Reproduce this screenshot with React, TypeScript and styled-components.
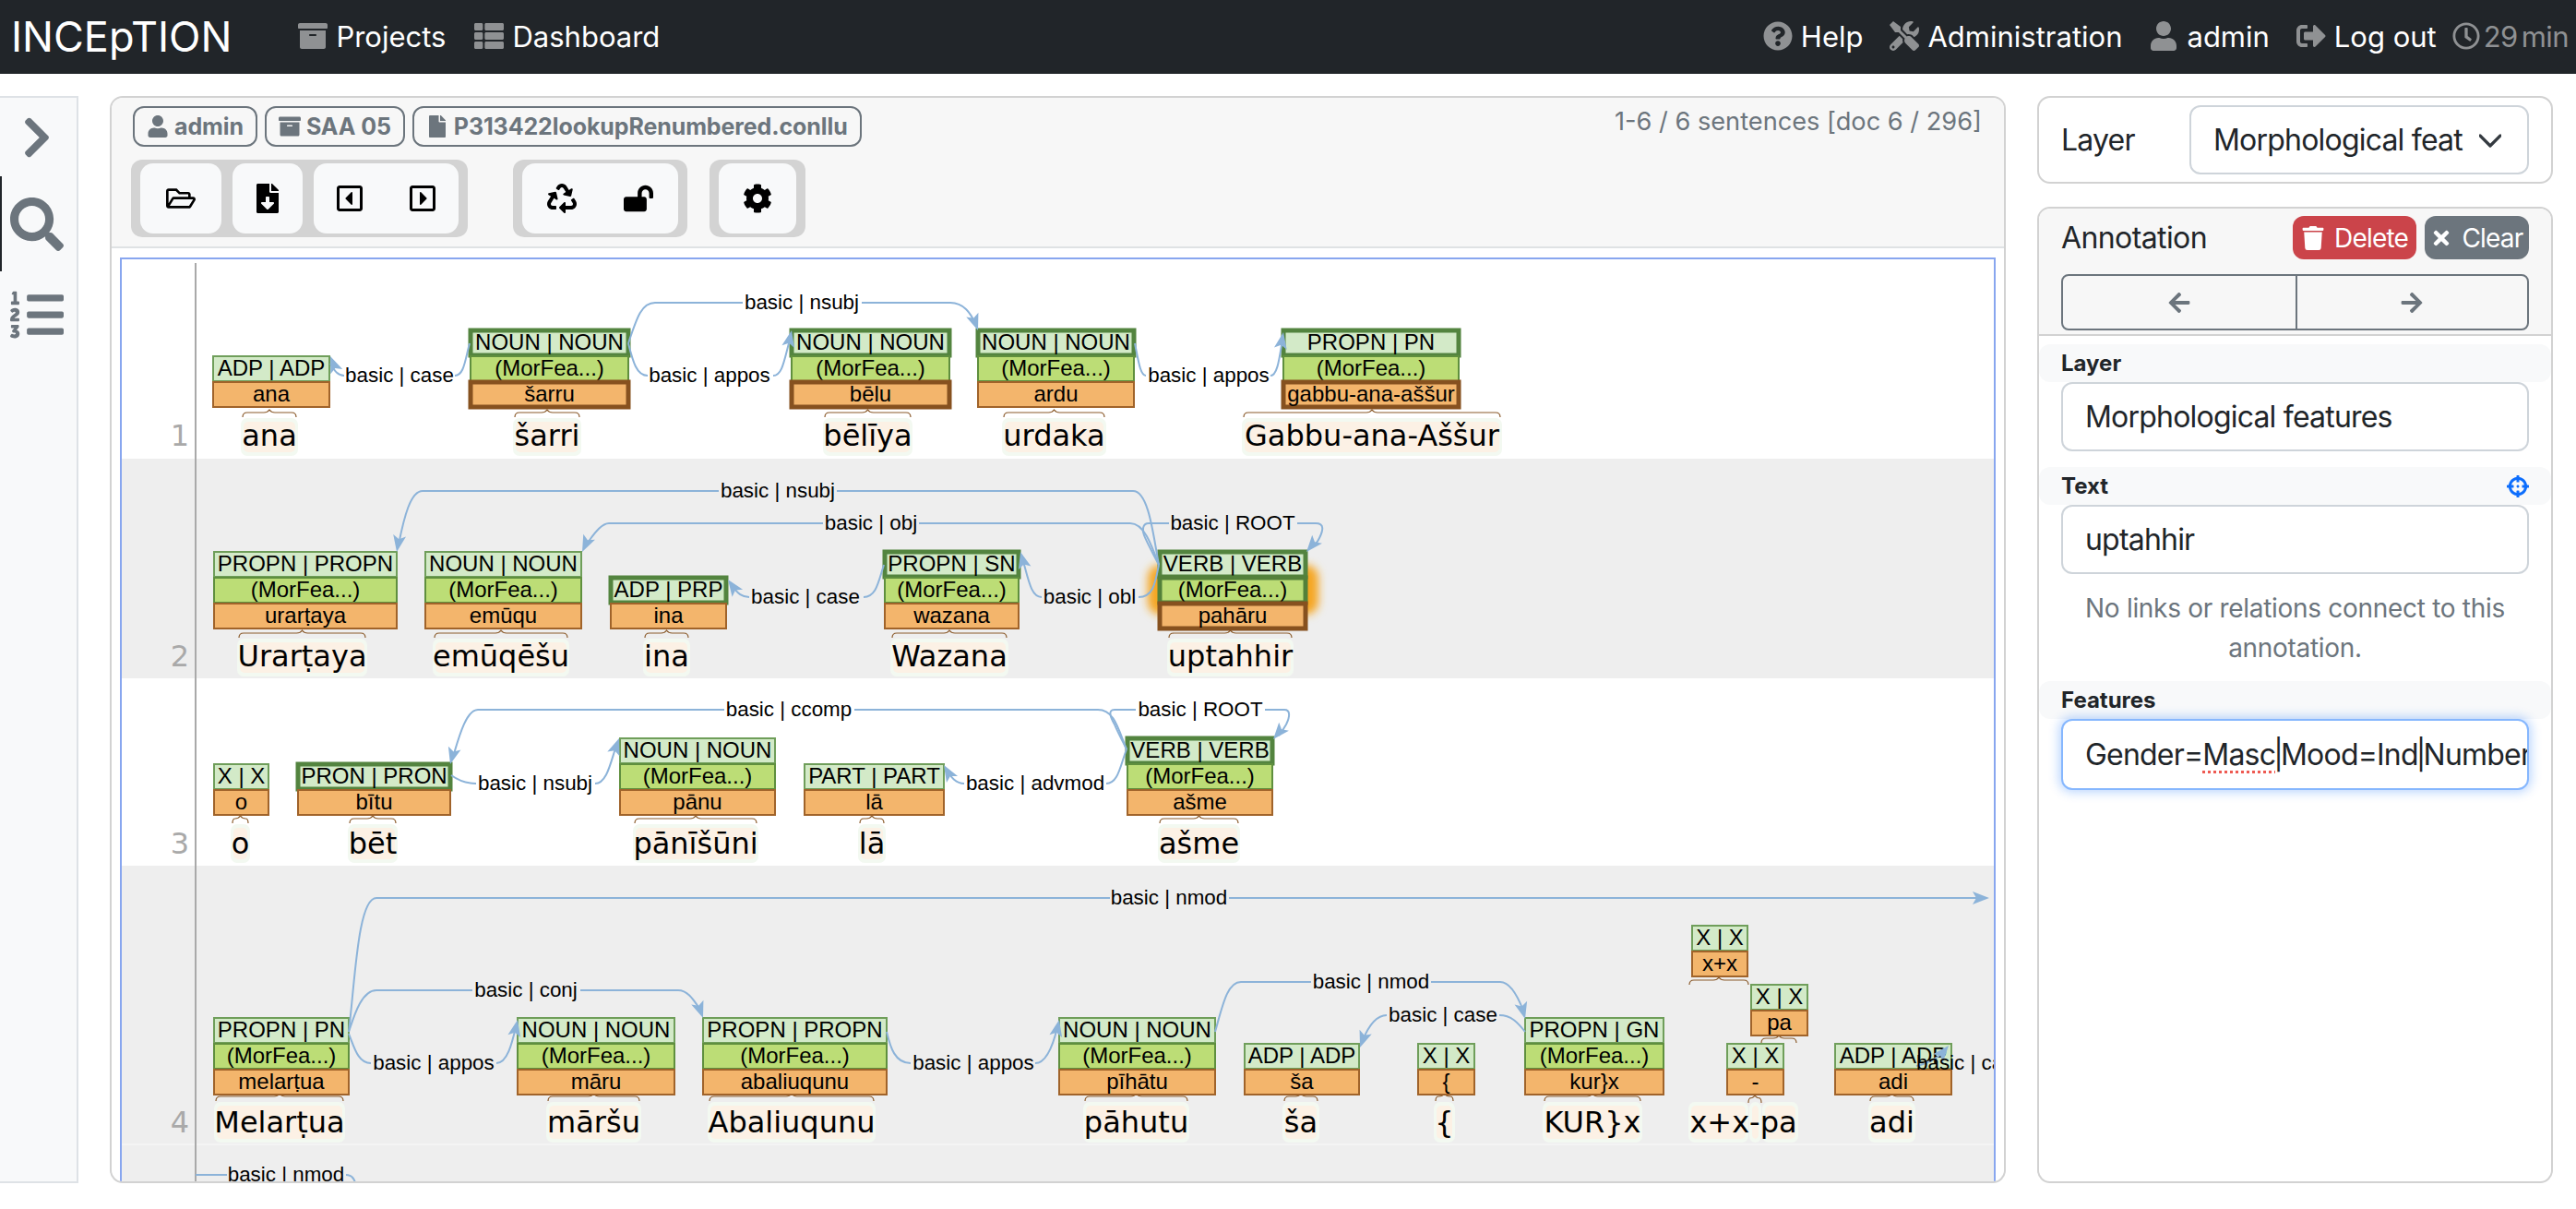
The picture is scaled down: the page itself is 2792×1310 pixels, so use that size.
import React from 'react'
import styled, { createGlobalStyle } from 'styled-components'
import {
  FaArchive, FaArrowLeft, FaArrowRight, FaChevronRight, FaCog, FaCrosshairs, FaFile, FaFileDownload,
  FaListOl, FaLockOpen, FaQuestionCircle, FaRecycle, FaRegCaretSquareLeft, FaRegCaretSquareRight,
  FaRegClock, FaRegFolderOpen, FaSearch, FaSignOutAlt, FaThList, FaTimes, FaTools, FaTrash, FaUser,
} from 'react-icons/fa'

const GlobalStyle = createGlobalStyle`
  html, body { margin: 0; padding: 0; background: #fff; }
  body { width: 2792px; height: 1310px; overflow: hidden; font-family: Inter, "Liberation Sans", sans-serif; color: #212529; }
  * { box-sizing: border-box; }
`

const Page = styled.div`
  width: 2792px;
  height: 1310px;
  display: flex;
  flex-direction: column;
`

const Navbar = styled.nav`
  height: 80px;
  flex: none;
  background: #212529;
  display: flex;
  align-items: center;
  padding: 0 8px 2px 12px;
  color: #fff;
`

const Brand = styled.span`
  font-size: 45px;
  margin-right: 72px;
`

const NavGroup = styled.div<{ $right?: boolean }>`
  display: flex;
  align-items: center;
  gap: ${p => (p.$right ? 29 : 31)}px;
  margin-left: ${p => (p.$right ? 'auto' : '0')};
`

const NavLink = styled.a`
  display: flex;
  align-items: center;
  gap: 9px;
  font-size: 31px;
  svg { color: #8f9193; }
`

const Timer = styled.span`
  display: flex;
  align-items: center;
  gap: 4px;
  font-size: 31px;
  letter-spacing: -0.6px;
  word-spacing: -4px;
  color: #8f9193;
  margin-left: -12px;
`

const Workspace = styled.div`
  flex: 1;
  min-height: 0;
  display: flex;
  gap: 34px;
  padding: 24px 25px 28px 0;
`

const Sidebar = styled.aside`
  width: 85px;
  flex: none;
  background: #f8f9fa;
  border: 2px solid #dee2e6;
  border-left: none;
  color: #6c757d;
  display: flex;
  flex-direction: column;
`

const SideItem = styled.div<{ $height: number; $active?: boolean }>`
  height: ${p => p.$height}px;
  display: flex;
  align-items: center;
  justify-content: center;
  border-left: 2px solid ${p => (p.$active ? '#212529' : 'transparent')};
  padding-right: 6px;
`

const Card = styled.section`
  border: 2px solid #d2d2d2;
  border-radius: 14px;
  overflow: hidden;
  background: #fff;
  display: flex;
  flex-direction: column;
`

const EditorCard = styled(Card)`
  width: 2055px;
  flex: none;
`

const EditorHeader = styled.header`
  flex: none;
  height: 163px;
  background: #f7f7f7;
  border-bottom: 2px solid #dfe2e4;
  padding: 9px 23px 0;
  position: relative;
`

const BadgeRow = styled.div`
  display: flex;
  gap: 8px;
`

const Badge = styled.span`
  height: 44px;
  display: flex;
  align-items: center;
  gap: 6px;
  padding: 0 13px;
  border: 2px solid #6c757d;
  border-radius: 12px;
  color: #6c757d;
  font-size: 25px;
  font-weight: 700;
  letter-spacing: -0.1px;
`

const SentenceInfo = styled.span`
  position: absolute;
  right: 24px;
  top: 9px;
  font-size: 27.2px;
  color: #6c757d;
`

const Toolbar = styled.div`
  display: flex;
  margin: 14px 0 0 -2px;
`

const ToolGroup = styled.div<{ $gapAfter: number }>`
  display: flex;
  gap: 12px;
  background: #d3d3d3;
  border-radius: 12px;
  padding: 4px 10px;
  margin-right: ${p => p.$gapAfter}px;
`

const ToolButton = styled.div<{ $width: number; $gap?: number }>`
  width: ${p => p.$width}px;
  height: 76px;
  background: #f8f9fa;
  border-radius: 14px;
  display: flex;
  align-items: center;
  justify-content: center;
  gap: ${p => p.$gap ?? 0}px;
  color: #000;
`

const AnnotationView = styled.div`
  flex: 1;
  min-height: 0;
  padding: 10px 9px 0;
`

const ViewFrame = styled.div`
  border: 2px solid #88a6ef;
  border-bottom: none;
  height: 1010px;
`

const Diagram = styled.svg`
  display: block;
`

const RowBand = styled.rect<{ $grey?: boolean }>`
  fill: ${p => (p.$grey ? '#eeeeee' : '#ffffff')};
`

const RowDivider = styled.line`
  stroke: #f4f4f4;
  stroke-width: 2px;
`

const BOX_STYLE = {
  pos: { fill: '#d3eac8', thin: '#6f9e5a', thick: '#53843f' },
  morph: { fill: '#bcdd76', thin: '#5f8f3e', thick: '#53803a' },
  lemma: { fill: '#f3b56c', thin: '#a0632a', thick: '#86511f' },
}

type BoxKind = keyof typeof BOX_STYLE

const BoxRect = styled.rect<{ $kind: BoxKind; $thick?: boolean }>`
  fill: ${p => BOX_STYLE[p.$kind].fill};
  stroke: ${p => (p.$thick ? BOX_STYLE[p.$kind].thick : BOX_STYLE[p.$kind].thin)};
  stroke-width: ${p => (p.$thick ? 5 : 2)}px;
`

const BoxText = styled.text`
  font-family: "Liberation Sans", Arial, sans-serif;
  font-size: 24px;
  fill: #000;
  text-anchor: middle;
`

const ArcLabel = styled.text<{ $start?: boolean }>`
  font-family: "Liberation Sans", Arial, sans-serif;
  font-size: 22.4px;
  fill: #000;
  text-anchor: ${p => (p.$start ? 'start' : 'middle')};
`

const ArcLine = styled.path`
  fill: none;
  stroke: #8cb3d9;
  stroke-width: 2px;
`

const ArrowHead = styled.path`
  fill: #8cb3d9;
`

const Brace = styled.path`
  fill: none;
  stroke: #8a5a2a;
  stroke-width: 1.2px;
`

const TokenOuter = styled.rect`
  fill: #f3f9f1;
`

const TokenInner = styled.rect`
  fill: #fcf1e5;
`

const TokenWord = styled.text`
  font-family: "DejaVu Sans", Verdana, sans-serif;
  font-size: 32px;
  fill: #000;
  text-anchor: middle;
`

const RowNumber = styled.text`
  font-family: "DejaVu Sans", Verdana, sans-serif;
  font-size: 32px;
  fill: #a9a9a9;
  text-anchor: end;
`

const SentenceRule = styled.line`
  stroke: #a9a9a9;
  stroke-width: 2px;
`

const Glow = styled.rect`
  fill: #f5a623;
`

const SidePanel = styled.div`
  flex: 1;
  min-width: 0;
  display: flex;
  flex-direction: column;
  gap: 25px;
`

const LayerCard = styled(Card)`
  height: 95px;
  flex: none;
  flex-direction: row;
  align-items: center;
  justify-content: space-between;
  padding: 0 24px;
  font-size: 32px;
  letter-spacing: -0.8px;
`

const SelectBox = styled.div`
  width: 368px;
  height: 75px;
  border: 2px solid #ced4da;
  border-radius: 12px;
  display: flex;
  align-items: center;
  justify-content: space-between;
  padding: 0 28px 0 24px;
  font-size: 32px;
  white-space: nowrap;
  overflow: hidden;
`

const AnnotationCard = styled(Card)`
  flex: 1;
  min-height: 0;
`

const AnnotationHeader = styled.header`
  flex: none;
  height: 138px;
  background: #f7f7f7;
  border-bottom: 2px solid #d2d2d2;
  padding: 8px 24px 0;
`

const TitleRow = styled.div`
  display: flex;
  align-items: center;
  justify-content: space-between;
  height: 47px;
  font-size: 32px;
  letter-spacing: -0.6px;
`

const ButtonPair = styled.div`
  display: flex;
  gap: 9px;
`

const ActionButton = styled.span<{ $danger?: boolean; $width: number }>`
  width: ${p => p.$width}px;
  height: 47px;
  border-radius: 12px;
  background: ${p => (p.$danger ? '#cb444a' : '#6c757d')};
  color: #fff;
  font-size: 28px;
  letter-spacing: -0.8px;
  display: flex;
  align-items: center;
  justify-content: center;
  gap: 10px;
`

const StepGroup = styled.div`
  margin-top: 16px;
  height: 61px;
  border: 2px solid #6c757d;
  border-radius: 8px;
  display: grid;
  grid-template-columns: 1fr 1fr;
  color: #6c757d;
`

const StepCell = styled.span<{ $divider?: boolean }>`
  display: flex;
  align-items: center;
  justify-content: center;
  border-left: ${p => (p.$divider ? '2px solid #6c757d' : 'none')};
`

const FormBody = styled.div`
  padding-top: 9px;
`

const FieldStrip = styled.div`
  height: 41px;
  background: #f8f9fa;
  border-radius: 12px;
  display: flex;
  align-items: center;
  justify-content: space-between;
  padding: 0 24px;
  font-size: 24px;
  font-weight: 700;
  svg { color: #0d6efd; }
`

const FieldInput = styled.div<{ $focus?: boolean }>`
  height: ${p => (p.$focus ? 77 : 75)}px;
  margin: 0 24px 17px;
  border: 2px solid ${p => (p.$focus ? '#86b7fe' : '#ced4da')};
  border-radius: 12px;
  display: flex;
  align-items: center;
  padding-left: 24px;
  font-size: 32px;
  letter-spacing: -0.8px;
  white-space: pre;
  overflow: hidden;
  background: #fff;
  box-shadow: ${p => (p.$focus ? '0 0 12px 2px rgba(13, 110, 253, 0.3)' : 'none')};
`

const Misspelled = styled.span`
  text-decoration: underline dotted #ee5a52 3px;
  text-underline-offset: 6px;
`

const Pipe = styled.span`
  margin: 0 -2px;
`

const HelpText = styled.p`
  margin: -1px 24px 14px;
  text-align: center;
  font-size: 28px;
  letter-spacing: -0.3px;
  line-height: 43px;
  color: #6c757d;
`

type Column = {
  x1: number
  x2: number
  o: number
  pos: string
  lemma: string
  morph?: boolean
  bold?: string
}

const R1 = 414
const R2 = 654
const R3 = 856
const R4 = 1159

const columns: Column[] = [
  { x1: 231, x2: 357, o: R1, pos: 'ADP | ADP', lemma: 'ana' },
  { x1: 510, x2: 681, o: R1, pos: 'NOUN | NOUN', lemma: 'šarru', morph: true, bold: 'pl' },
  { x1: 858, x2: 1029, o: R1, pos: 'NOUN | NOUN', lemma: 'bēlu', morph: true, bold: 'pl' },
  { x1: 1060, x2: 1229, o: R1, pos: 'NOUN | NOUN', lemma: 'ardu', morph: true, bold: 'p' },
  { x1: 1391, x2: 1581, o: R1, pos: 'PROPN | PN', lemma: 'gabbu-ana-aššur', morph: true, bold: 'pl' },
  { x1: 232, x2: 430, o: R2, pos: 'PROPN | PROPN', lemma: 'urarṭaya', morph: true },
  { x1: 461, x2: 630, o: R2, pos: 'NOUN | NOUN', lemma: 'emūqu', morph: true },
  { x1: 662, x2: 787, o: R2, pos: 'ADP | PRP', lemma: 'ina', bold: 'p' },
  { x1: 959, x2: 1104, o: R2, pos: 'PROPN | SN', lemma: 'wazana', morph: true, bold: 'p' },
  { x1: 1257, x2: 1415, o: R2, pos: 'VERB | VERB', lemma: 'pahāru', morph: true, bold: 'pml' },
  { x1: 232, x2: 291, o: R3, pos: 'X | X', lemma: 'o' },
  { x1: 323, x2: 488, o: R3, pos: 'PRON | PRON', lemma: 'bītu', bold: 'p' },
  { x1: 672, x2: 840, o: R3, pos: 'NOUN | NOUN', lemma: 'pānu', morph: true },
  { x1: 872, x2: 1023, o: R3, pos: 'PART | PART', lemma: 'lā' },
  { x1: 1222, x2: 1379, o: R3, pos: 'VERB | VERB', lemma: 'ašme', morph: true, bold: 'p' },
  { x1: 232, x2: 378, o: R4, pos: 'PROPN | PN', lemma: 'melarṭua', morph: true },
  { x1: 561, x2: 731, o: R4, pos: 'NOUN | NOUN', lemma: 'māru', morph: true },
  { x1: 762, x2: 961, o: R4, pos: 'PROPN | PROPN', lemma: 'abaliuqunu', morph: true },
  { x1: 1148, x2: 1317, o: R4, pos: 'NOUN | NOUN', lemma: 'pīhātu', morph: true },
  { x1: 1349, x2: 1473, o: R4, pos: 'ADP | ADP', lemma: 'ša' },
  { x1: 1537, x2: 1598, o: R4, pos: 'X | X', lemma: '{' },
  { x1: 1653, x2: 1803, o: R4, pos: 'PROPN | GN', lemma: 'kur}x', morph: true },
  { x1: 1872, x2: 1933, o: R4, pos: 'X | X', lemma: '-' },
  { x1: 1989, x2: 2115, o: R4, pos: 'ADP | ADP', lemma: 'adi' },
  { x1: 1834, x2: 1894, o: 1031, pos: 'X | X', lemma: 'x+x' },
  { x1: 1898, x2: 1959, o: 1095, pos: 'X | X', lemma: 'pa' },
]

type Token = {
  x1: number
  x2: number
  y: number
  h: number
  text: string
  base: number
  parts?: [number, number][]
  noBrace?: boolean
}

const tokens: Token[] = [
  { x1: 261, x2: 323, y: 453, h: 41, text: 'ana', base: 483 },
  { x1: 556, x2: 630, y: 453, h: 41, text: 'šarri', base: 483 },
  { x1: 892, x2: 989, y: 453, h: 41, text: 'bēlīya', base: 483 },
  { x1: 1086, x2: 1199, y: 453, h: 41, text: 'urdaka', base: 483 },
  { x1: 1346, x2: 1628, y: 453, h: 41, text: 'Gabbu-ana-Aššur', base: 483 },
  { x1: 257, x2: 398, y: 692, h: 41, text: 'Urarṭaya', base: 722 },
  { x1: 469, x2: 617, y: 692, h: 41, text: 'emūqēšu', base: 722 },
  { x1: 697, x2: 748, y: 692, h: 41, text: 'ina', base: 722 },
  { x1: 965, x2: 1093, y: 692, h: 41, text: 'Wazana', base: 722 },
  { x1: 1265, x2: 1402, y: 692, h: 41, text: 'uptahhir', base: 722 },
  { x1: 250, x2: 271, y: 893, h: 42, text: 'o', base: 925 },
  { x1: 377, x2: 431, y: 893, h: 42, text: 'bēt', base: 925 },
  { x1: 686, x2: 822, y: 893, h: 42, text: 'pānīšūni', base: 925 },
  { x1: 930, x2: 960, y: 893, h: 42, text: 'lā', base: 925 },
  { x1: 1255, x2: 1344, y: 893, h: 42, text: 'ašme', base: 925 },
  { x1: 232, x2: 374, y: 1194, h: 44, text: 'Melarṭua', base: 1227 },
  { x1: 592, x2: 695, y: 1194, h: 44, text: 'māršu', base: 1227 },
  { x1: 767, x2: 949, y: 1194, h: 44, text: 'Abaliuqunu', base: 1227 },
  { x1: 1174, x2: 1289, y: 1194, h: 44, text: 'pāhutu', base: 1227 },
  { x1: 1390, x2: 1430, y: 1194, h: 44, text: 'ša', base: 1227 },
  { x1: 1554, x2: 1577, y: 1194, h: 44, text: '{', base: 1227 },
  { x1: 1672, x2: 1780, y: 1194, h: 44, text: 'KUR}x', base: 1227 },
  { x1: 1830, x2: 1949, y: 1194, h: 44, text: 'x+x-pa', base: 1227, noBrace: true, parts: [[1830, 1895], [1896, 1909], [1910, 1949]] },
  { x1: 2025, x2: 2076, y: 1194, h: 44, text: 'adi', base: 1227 },
]

type Curly = { x1: number; x2: number; y: number }

const extraBraces: Curly[] = [
  { x1: 1831, x2: 1895, y: 1067 },
  { x1: 1909, x2: 1947, y: 1130 },
  { x1: 1895, x2: 1909, y: 1195 },
]

type Arc = { lines: string[]; tip?: [number, number, number]; label: string; x: number; y: number; start?: boolean }

const arcs: Arc[] = [
  { lines: ['M509 372 C504 390 503 407 493 407', 'M373 407 C365 407 362 400 358 394'], tip: [358, 386, -112], label: 'basic | case', x: 433, y: 414 },
  { lines: ['M681 372 C686 392 690 407 702 407', 'M838 407 C848 407 850 390 856 368'], tip: [858, 358, -78], label: 'basic | appos', x: 769, y: 414 },
  { lines: ['M681 372 C690 345 695 328 710 328 H805', 'M934 328 H1030 C1045 328 1052 340 1057 350'], tip: [1060, 358, 70], label: 'basic | nsubj', x: 869, y: 335 },
  { lines: ['M1230 372 C1234 392 1236 407 1242 407', 'M1377 407 C1385 407 1387 385 1390 368'], tip: [1391, 360, -80], label: 'basic | appos', x: 1310, y: 414 },

  { lines: ['M1256 612 C1250 580 1245 532 1228 532 H907', 'M779 532 H458 C445 532 438 560 432 590'], tip: [430, 598, 100], label: 'basic | nsubj', x: 843, y: 539 },
  { lines: ['M1256 612 C1248 590 1240 567 1225 567 H996', 'M892 567 H660 C650 567 640 585 635 590'], tip: [631, 598, 115], label: 'basic | obj', x: 944, y: 574 },
  { lines: ['M1267 567 H1245 C1238 567 1238 575 1240 580 C1244 590 1250 600 1256 612', 'M1406 567 H1426 C1436 567 1434 575 1430 583 C1427 589 1425 591 1422 592'], tip: [1416, 598, 130], label: 'basic | ROOT', x: 1336, y: 574 },
  { lines: ['M958 612 C952 630 950 647 936 647', 'M812 647 C802 647 798 640 794 636'], tip: [789, 628, -125], label: 'basic | case', x: 873, y: 654 },
  { lines: ['M1256 612 C1252 632 1250 647 1234 647', 'M1129 647 C1118 647 1115 630 1109 608'], tip: [1106, 598, -105], label: 'basic | obl', x: 1181, y: 654 },

  { lines: ['M1221 812 C1212 790 1208 769 1190 769 H926', 'M785 769 H518 C505 769 497 800 491 820'], tip: [488, 828, 105], label: 'basic | ccomp', x: 855, y: 776 },
  { lines: ['M1231 769 H1208 C1200 769 1204 778 1208 785 C1212 795 1218 805 1221 812', 'M1371 769 H1392 C1399 769 1398 777 1394 785 C1391 790 1388 795 1386 797'], tip: [1380, 801, 130], label: 'basic | ROOT', x: 1301, y: 776 },
  { lines: ['M489 840 C496 845 504 849 516 849', 'M645 849 C658 849 662 825 668 808'], tip: [671, 800, -70], label: 'basic | nsubj', x: 580, y: 856 },
  { lines: ['M1199 849 C1212 849 1214 830 1221 812', 'M1045 849 C1036 849 1031 842 1027 836'], tip: [1023, 829, -120], label: 'basic | advmod', x: 1122, y: 856 },

  { lines: ['M378 1118 C385 1060 388 973 408 973 H1203', 'M1332 973 H2145'], tip: [2156, 973, 0], label: 'basic | nmod', x: 1267, y: 980 },
  { lines: ['M378 1118 C384 1100 392 1073 408 1073 H512', 'M629 1073 H735 C748 1073 755 1090 760 1095'], tip: [762, 1103, 70], label: 'basic | conj', x: 570, y: 1080 },
  { lines: ['M378 1120 C384 1135 388 1152 402 1152', 'M538 1152 C550 1152 555 1130 559 1113'], tip: [561, 1105, -78], label: 'basic | appos', x: 470, y: 1159 },
  { lines: ['M961 1118 C965 1135 970 1152 987 1152', 'M1122 1152 C1135 1152 1142 1130 1146 1113'], tip: [1148, 1105, -78], label: 'basic | appos', x: 1055, y: 1159 },
  { lines: ['M1317 1118 C1325 1090 1330 1064 1345 1064 H1421', 'M1551 1064 H1626 C1638 1064 1646 1082 1651 1095'], tip: [1653, 1104, 75], label: 'basic | nmod', x: 1486, y: 1071 },
  { lines: ['M1653 1118 C1645 1108 1638 1100 1625 1100', 'M1503 1100 C1490 1100 1482 1115 1477 1127'], tip: [1474, 1135, 110], label: 'basic | case', x: 1564, y: 1107 },
  { lines: ['M2077 1155 C2090 1152 2100 1146 2105 1141'], tip: [2112, 1133, -50], label: 'basic | case', x: 2077, y: 1159, start: true },
  { lines: ['M212 1273 H246', 'M375 1273 C382 1273 384 1278 386 1284'], label: 'basic | nmod', x: 310, y: 1280 },
]

const bracePath = ({ x1, x2, y }: Curly) => {
  const cx = (x1 + x2) / 2
  const r = Math.min(5, (x2 - x1) / 6)
  return `M${x1} ${y} q0 -5 ${r} -5 H${cx - 6} q4 0 6 -3 q2 3 6 3 H${x2 - r} q${r} 0 ${r} 5`
}

function StackedColumn({ col }: { col: Column }) {
  const w = col.x2 - col.x1
  const cx = (col.x1 + col.x2) / 2
  const bold = col.bold ?? ''
  const posY = col.o - (col.morph ? 56 : 28)
  return (
    <g>
      <BoxRect $kind="pos" $thick={bold.includes('p')} x={col.x1} y={posY} width={w} height={27} />
      <BoxText x={cx} y={posY + 21}>{col.pos}</BoxText>
      {col.morph && (
        <>
          <BoxRect $kind="morph" $thick={bold.includes('m')} x={col.x1} y={col.o - 28} width={w} height={27} />
          <BoxText x={cx} y={col.o - 7}>(MorFea...)</BoxText>
        </>
      )}
      <BoxRect $kind="lemma" $thick={bold.includes('l')} x={col.x1} y={col.o} width={w} height={27} />
      <BoxText x={cx} y={col.o + 21}>{col.lemma}</BoxText>
    </g>
  )
}

function TokenMark({ token }: { token: Token }) {
  const cx = (token.x1 + token.x2) / 2
  const parts = token.parts ?? [[token.x1, token.x2]]
  return (
    <g>
      {parts.map(([a, b], i) => (
        <g key={i}>
          <TokenOuter x={a} y={token.y} width={b - a} height={token.h} rx={7} />
          <TokenInner x={a + 3} y={token.y + 4} width={b - a - 6} height={token.h - 8} rx={5} />
        </g>
      ))}
      {!token.noBrace && <Brace d={bracePath({ x1: token.x1 + 2, x2: token.x2 - 2, y: token.y - 1 })} />}
      <TokenWord x={cx} y={token.base}>{token.text}</TokenWord>
    </g>
  )
}

function ArcMark({ arc }: { arc: Arc }) {
  return (
    <g>
      {arc.lines.map((d, i) => <ArcLine key={i} d={d} />)}
      {arc.tip && (
        <ArrowHead d="M0 0 L-18 -7 L-14 0 L-18 7 Z" transform={`translate(${arc.tip[0]} ${arc.tip[1]}) rotate(${arc.tip[2]})`} />
      )}
      <ArcLabel $start={arc.start} x={arc.x} y={arc.y}>{arc.label}</ArcLabel>
    </g>
  )
}

function SentenceDiagram() {
  return (
    <Diagram width={2029} height={1010} viewBox="132 281 2029 1010">
      <defs>
        <filter id="selected-glow" x="-20%" y="-40%" width="140%" height="180%">
          <feGaussianBlur stdDeviation="5" />
        </filter>
      </defs>
      <RowBand x={132} y={281} width={2029} height={216} />
      <RowBand $grey x={132} y={497} width={2029} height={238} />
      <RowBand x={132} y={735} width={2029} height={203} />
      <RowBand $grey x={132} y={938} width={2029} height={352} />
      <RowDivider x1={132} y1={1240} x2={2161} y2={1240} />
      <SentenceRule x1={212} y1={285} x2={212} y2={1291} />
      <RowNumber x={205} y={483}>1</RowNumber>
      <RowNumber x={205} y={722}>2</RowNumber>
      <RowNumber x={205} y={925}>3</RowNumber>
      <RowNumber x={205} y={1227}>4</RowNumber>
      <Glow x={1244} y={612} width={185} height={54} rx={14} filter="url(#selected-glow)" />
      {tokens.map((t, i) => <TokenMark key={i} token={t} />)}
      {extraBraces.map((b, i) => <Brace key={i} d={bracePath(b)} />)}
      {columns.map((c, i) => <StackedColumn key={i} col={c} />)}
      {arcs.map((a, i) => <ArcMark key={i} arc={a} />)}
    </Diagram>
  )
}

export default function App() {
  return (
    <Page>
      <GlobalStyle />
      <Navbar>
        <Brand>INCEpTION</Brand>
        <NavGroup>
          <NavLink><FaArchive size={32} />Projects</NavLink>
          <NavLink><FaThList size={32} />Dashboard</NavLink>
        </NavGroup>
        <NavGroup $right>
          <NavLink><FaQuestionCircle size={32} />Help</NavLink>
          <NavLink><FaTools size={32} />Administration</NavLink>
          <NavLink><FaUser size={32} />admin</NavLink>
          <NavLink><FaSignOutAlt size={32} />Log out</NavLink>
          <Timer><FaRegClock size={30} />29 min</Timer>
        </NavGroup>
      </Navbar>
      <Workspace>
        <Sidebar>
          <SideItem $height={85}><FaChevronRight size={50} /></SideItem>
          <SideItem $height={103} $active><FaSearch size={58} /></SideItem>
          <SideItem $height={94}><FaListOl size={58} /></SideItem>
        </Sidebar>
        <EditorCard>
          <EditorHeader>
            <BadgeRow>
              <Badge><FaUser size={24} />admin</Badge>
              <Badge><FaArchive size={24} />SAA 05</Badge>
              <Badge><FaFile size={24} />P313422lookupRenumbered.conllu</Badge>
            </BadgeRow>
            <SentenceInfo>1-6 / 6 sentences [doc 6 / 296]</SentenceInfo>
            <Toolbar>
              <ToolGroup $gapAfter={49}>
                <ToolButton $width={88}><FaRegFolderOpen size={32} /></ToolButton>
                <ToolButton $width={76}><FaFileDownload size={32} /></ToolButton>
                <ToolButton $width={157} $gap={47}>
                  <FaRegCaretSquareLeft size={32} />
                  <FaRegCaretSquareRight size={32} />
                </ToolButton>
              </ToolGroup>
              <ToolGroup $gapAfter={24}>
                <ToolButton $width={169} $gap={51}>
                  <FaRecycle size={32} />
                  <FaLockOpen size={32} />
                </ToolButton>
              </ToolGroup>
              <ToolGroup $gapAfter={0}>
                <ToolButton $width={84}><FaCog size={32} /></ToolButton>
              </ToolGroup>
            </Toolbar>
          </EditorHeader>
          <AnnotationView>
            <ViewFrame>
              <SentenceDiagram />
            </ViewFrame>
          </AnnotationView>
        </EditorCard>
        <SidePanel>
          <LayerCard>
            Layer
            <SelectBox>
              Morphological feat
              <svg width="24" height="24" viewBox="2 2 12 12" fill="none" stroke="#343a40" strokeWidth="1.6" strokeLinecap="round" strokeLinejoin="round">
                <path d="M2.5 5.5 8 11l5.5-5.5" />
              </svg>
            </SelectBox>
          </LayerCard>
          <AnnotationCard>
            <AnnotationHeader>
              <TitleRow>
                Annotation
                <ButtonPair>
                  <ActionButton $danger $width={134}><FaTrash size={26} />Delete</ActionButton>
                  <ActionButton $width={113}><FaTimes size={24} />Clear</ActionButton>
                </ButtonPair>
              </TitleRow>
              <StepGroup>
                <StepCell><FaArrowLeft size={26} /></StepCell>
                <StepCell $divider><FaArrowRight size={26} /></StepCell>
              </StepGroup>
            </AnnotationHeader>
            <FormBody>
              <FieldStrip>Layer</FieldStrip>
              <FieldInput>Morphological features</FieldInput>
              <FieldStrip>Text<FaCrosshairs size={24} /></FieldStrip>
              <FieldInput>uptahhir</FieldInput>
              <HelpText>No links or relations connect to this annotation.</HelpText>
              <FieldStrip>Features</FieldStrip>
              <FieldInput $focus>Gender=<Misspelled>Masc</Misspelled><Pipe>|</Pipe>Mood=Ind<Pipe>|</Pipe>Number</FieldInput>
            </FormBody>
          </AnnotationCard>
        </SidePanel>
      </Workspace>
    </Page>
  )
}
